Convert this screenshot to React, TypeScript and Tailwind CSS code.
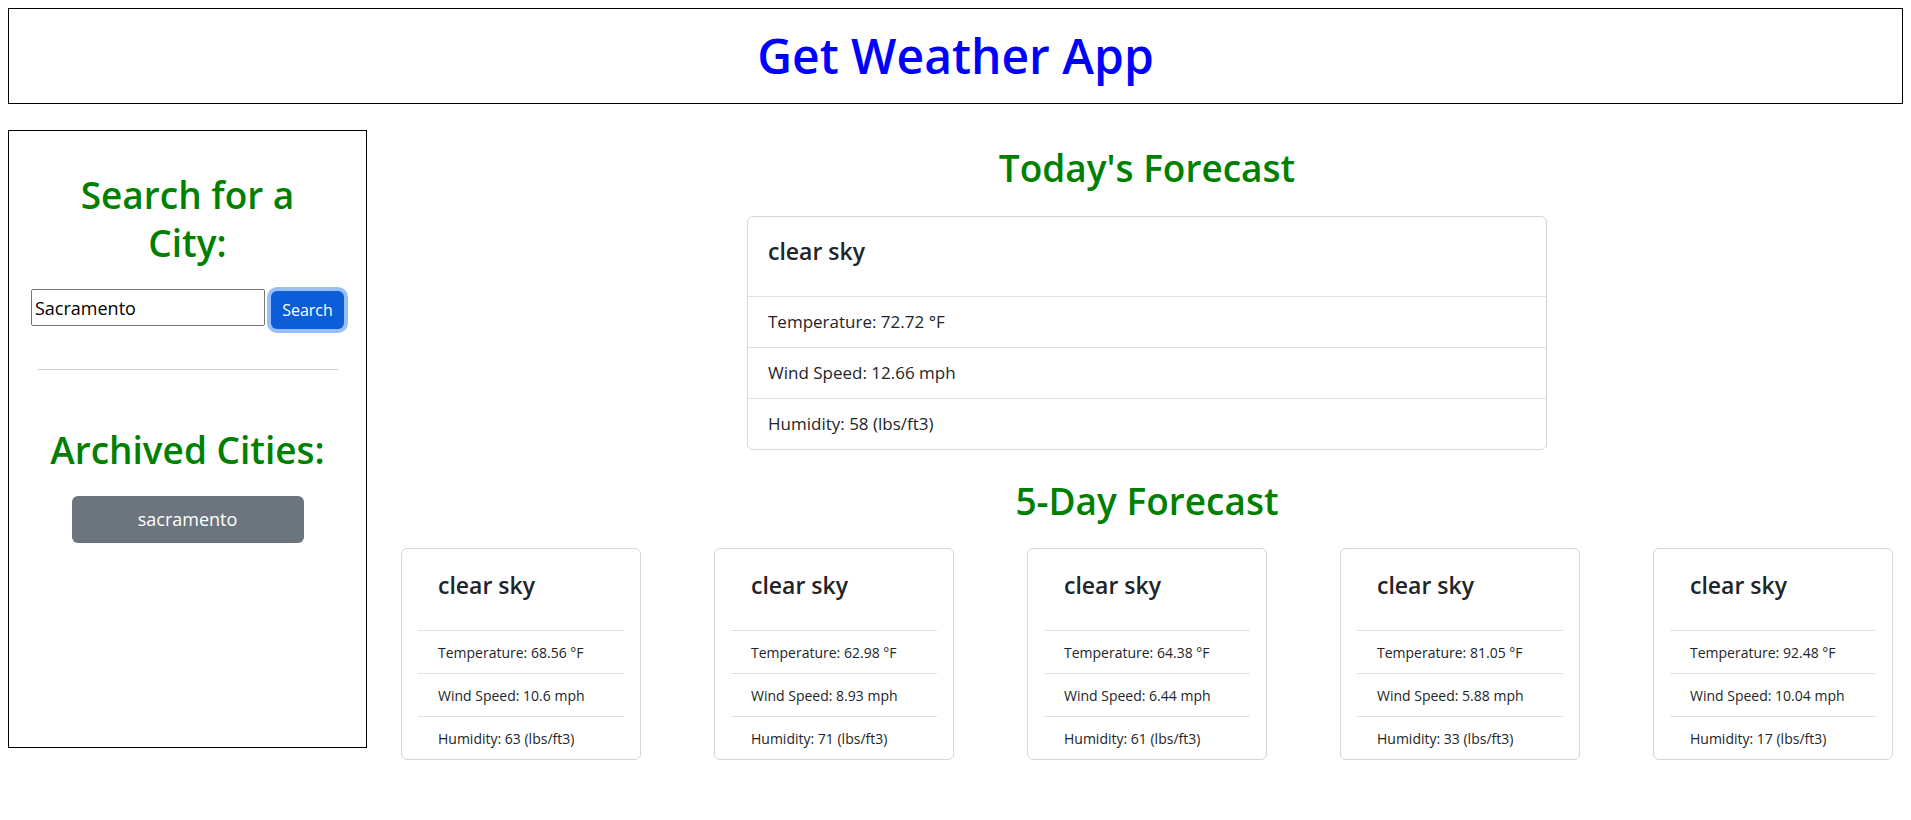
import React from 'react';

type Forecast = {
    description: string;
    temp: string;
    wind: string;
    humidity: number;
};

const today: Forecast = { description: 'clear sky', temp: '72.72', wind: '12.66', humidity: 58 };

const fiveDay: Forecast[] = [
    { description: 'clear sky', temp: '68.56', wind: '10.6', humidity: 63 },
    { description: 'clear sky', temp: '62.98', wind: '8.93', humidity: 71 },
    { description: 'clear sky', temp: '64.38', wind: '6.44', humidity: 61 },
    { description: 'clear sky', temp: '81.05', wind: '5.88', humidity: 33 },
    { description: 'clear sky', temp: '92.48', wind: '10.04', humidity: 17 },
];

const TodayCard: React.FC<{ data: Forecast }> = ({ data }) => (
    <div className="w-[800px] border border-[#d6d6d6] rounded-md text-[#212529]">
        <div className="h-[79px] px-5 pt-[20px]">
            <h5 className="text-[23px] leading-[29px] font-semibold">{data.description}</h5>
        </div>
        <div className="h-[51px] border-t border-[#dee2e6] px-5 flex items-center text-[17px]">Temperature: {data.temp} °F</div>
        <div className="h-[51px] border-t border-[#dee2e6] px-5 flex items-center text-[17px]">Wind Speed: {data.wind} mph</div>
        <div className="h-[51px] border-t border-[#dee2e6] px-5 flex items-center text-[17px]">Humidity: {data.humidity} (lbs/ft3)</div>
    </div>
);

const DayCard: React.FC<{ data: Forecast }> = ({ data }) => (
    <div className="w-[240px] border border-[#d6d6d6] rounded-md px-4 text-[#212529]">
        <div className="h-[81px] pl-5 pt-[22px]">
            <h5 className="text-[23px] leading-[29px] font-semibold">{data.description}</h5>
        </div>
        <div className="h-[43px] border-t border-[#dee2e6] pl-5 flex items-center text-[14px]">Temperature: {data.temp} °F</div>
        <div className="h-[43px] border-t border-[#dee2e6] pl-5 flex items-center text-[14px]">Wind Speed: {data.wind} mph</div>
        <div className="h-[43px] border-t border-[#dee2e6] pl-5 flex items-center text-[14px]">Humidity: {data.humidity} (lbs/ft3)</div>
    </div>
);

export default function App() {
    return (
        <div className="min-h-screen bg-white p-2 font-['Open_Sans',sans-serif]">
            <header className="h-[96px] border border-black flex items-center justify-center">
                <h1 className="text-[48px] leading-none font-semibold text-[#0000ff]">Get Weather App</h1>
            </header>

            <div className="mt-[26px] flex items-start">
                {/* sidebar */}
                <aside className="w-[359px] h-[618px] shrink-0 border border-black flex flex-col items-center">
                    <h2 className="mt-[40px] text-[37px] leading-[48px] font-semibold text-[#008000] text-center">
                        Search for a<br />City:
                    </h2>
                    <div className="mt-[22px] flex items-start gap-[6px]">
                        <input
                            type="text"
                            defaultValue="Sacramento"
                            className="w-[234px] h-[37px] border border-[#767676] rounded-[2px] px-[3px] text-[18px] text-black outline-none"
                        />
                        <button className="mt-[2px] w-[73px] h-[38px] rounded-md bg-[#0b5ed7] text-white text-[16px] ring-4 ring-[#98bff9]">
                            Search
                        </button>
                    </div>
                    <hr className="mt-[40px] w-[300px] border-t border-[#cfcfcf]" />
                    <h2 className="mt-[56px] text-[37px] leading-[48px] font-semibold text-[#008000] text-center">Archived Cities:</h2>
                    <button className="mt-[22px] w-[232px] h-[47px] rounded-md bg-[#6c757d] text-white text-[18px]">sacramento</button>
                </aside>

                {/* forecasts */}
                <main className="flex-1 pl-[24px] flex flex-col items-center">
                    <h2 className="mt-[14px] text-[37px] leading-[48px] font-semibold text-[#008000]">Today's Forecast</h2>
                    <div className="mt-[24px]">
                        <TodayCard data={today} />
                    </div>
                    <h2 className="mt-[27px] text-[37px] leading-[48px] font-semibold text-[#008000]">5-Day Forecast</h2>
                    <div className="mt-[23px] flex justify-center gap-[73px]">
                        {fiveDay.map((d, i) => (
                            <DayCard key={i} data={d} />
                        ))}
                    </div>
                </main>
            </div>
        </div>
    );
}
